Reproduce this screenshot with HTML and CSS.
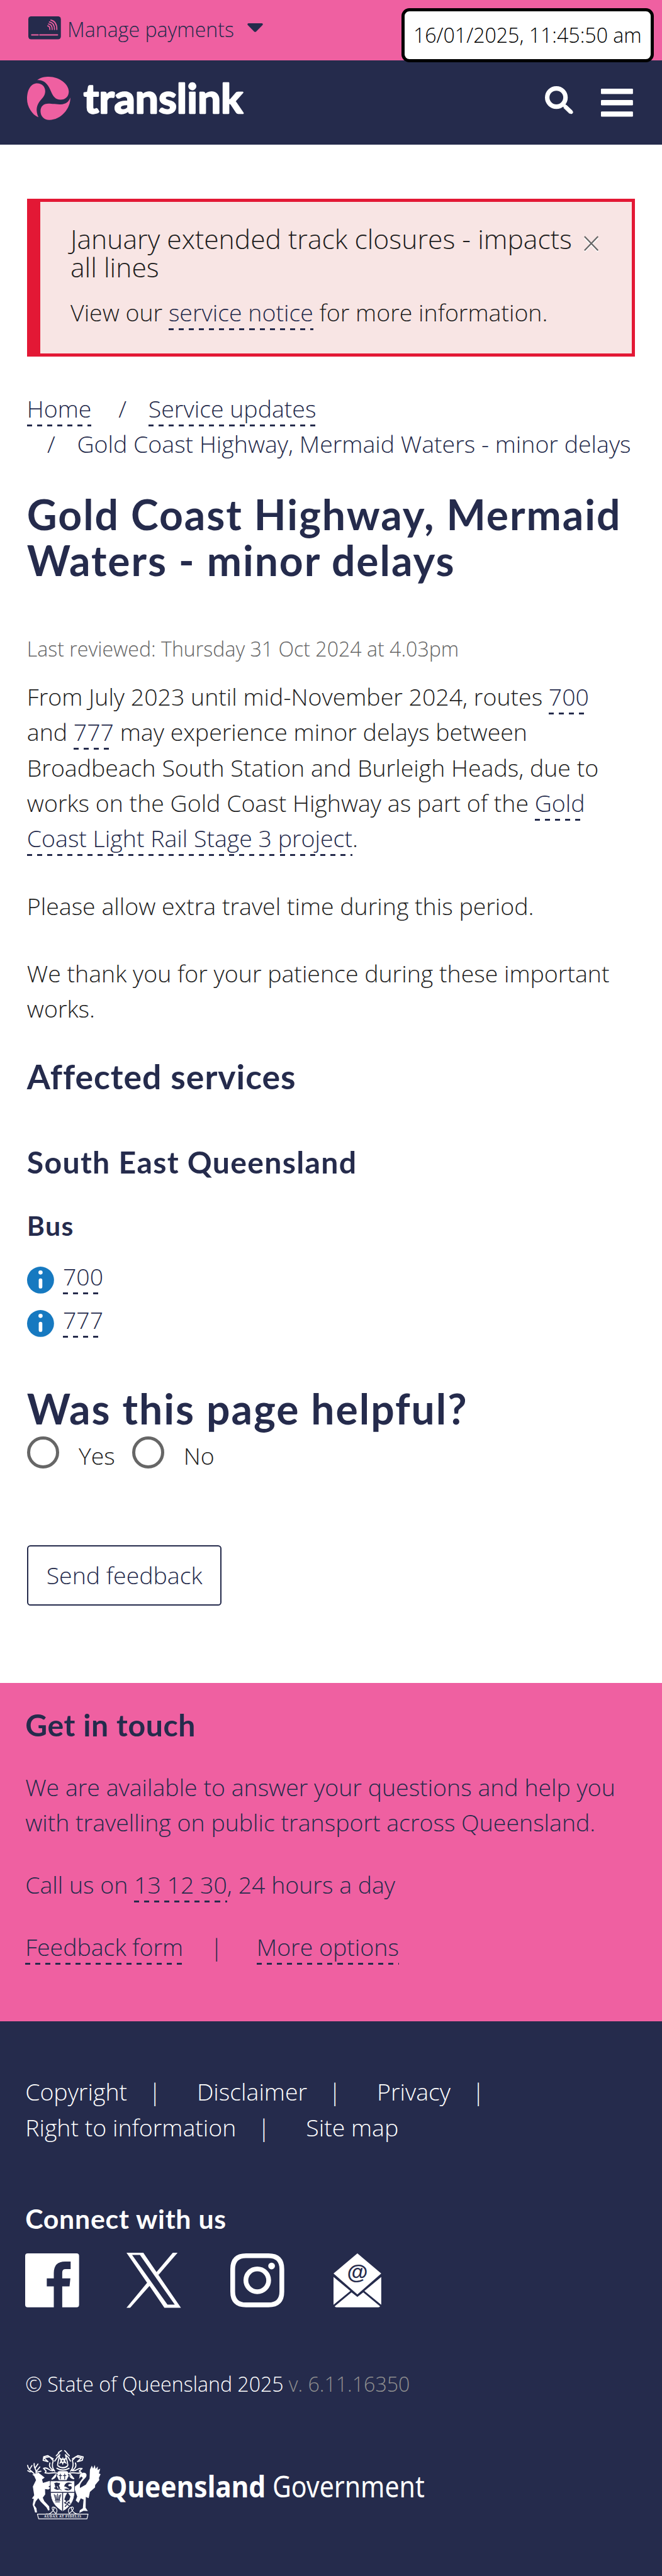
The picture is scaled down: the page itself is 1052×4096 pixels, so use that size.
FILE: index.html
```html
<!DOCTYPE html>
<html lang="en">
<head>
<meta charset="utf-8">
<title>Gold Coast Highway, Mermaid Waters - minor delays | Translink</title>
<link rel="stylesheet" href="styles.css">
</head>
<body>
<div class="payments-bar">
  <svg class="card-icon" viewBox="0 0 58 41"><rect width="58" height="41" rx="5" fill="#252b4c"/><g fill="none" stroke="#ef60a1" stroke-width="1.9" stroke-linecap="round"><path d="M6 33H17.500M20.500 33H52" stroke-width="2.300"/><path d="M40 6.500C47 8 51 14 50.800 23.500M37.500 10C43.500 11 46.800 16 46.600 23.500M36 13.500C40.500 14 42.600 18 42.500 23.500M34.500 17C37.500 17.500 38.500 20 38.400 23.500"/></g></svg>
  <span class="payments-label">Manage payments</span>
  <svg class="caret" viewBox="0 0 28 16"><path d="M2 0H26Q29 1 27 3.500L16 14.500Q14 16.500 12 14.500L1 3.500Q-1 1 2 0Z" fill="#252b4c"/></svg>
  <div class="timestamp">16/01/2025, 11:45:50 am</div>
</div>
<header class="site-header">
  <div class="logo">
    <svg class="logo-mark" viewBox="24 36 231 231" fill="#ef60a1">
      <path d="M78 54C95 40 120 36 140 36C195 36 247 75 247 115C247 142 228 159 203 159C175 159 163 140 152 115C140 85 120 50 78 54Z"/>
      <path d="M85 253C50 238 24 195 24 155C24 105 45 71 78 71C103 71 121 88 121 113C121 135 108 148 95 163C75 188 68 215 85 253Z"/>
      <path d="M255 147C258 205 205 267 143 267C115 267 96 248 96 220C96 195 112 180 138 180C155 180 185 184 205 184C230 183 248 170 255 147Z"/>
    </svg>
    <svg class="logo-word" viewBox="0 0 288 77"><text class="logo-text" x="2" y="65" textLength="284" lengthAdjust="spacingAndGlyphs">translink</text></svg>
  </div>
  <div class="header-tools">
    <svg class="search-icon" viewBox="0 0 50 50"><circle cx="20.300" cy="20.300" r="16.300" fill="none" stroke="#fff" stroke-width="8"/><path d="M35.500 36L46.500 46.500" stroke="#fff" stroke-width="7.500" stroke-linejoin="round"/><path d="M34 34L47 46.500" stroke="#fff" stroke-width="6" stroke-linecap="round"/></svg>
    <svg class="menu-icon" viewBox="0 0 57 50"><g fill="#fff"><rect width="57" height="9.500" rx="1.500"/><rect y="20.300" width="57" height="9.500" rx="1.500"/><rect y="40.500" width="57" height="9.500" rx="1.500"/></g></svg>
  </div>
</header>
<main class="content">
  <section class="alert">
    <div class="alert-body">
      <h2 class="alert-title">January extended track closures - impacts<br>all lines</h2>
      <p class="text">View our <a class="link">service notice</a> for more information.</p>
    </div>
    <svg class="close-icon" viewBox="0 0 26 29"><path d="M1 4L25 28M25 4L1 28" stroke="#fff" stroke-width="2.500"/><path d="M1 1L25 26M25 1L1 26" stroke="#666" stroke-width="2.500"/></svg>
  </section>
  <nav class="breadcrumb">
    <div class="crumb-row"><a class="link">Home</a><span class="slash">/</span><a class="link">Service updates</a></div>
    <div class="crumb-row crumb-current"><span>/</span><span>Gold Coast Highway, Mermaid Waters - minor delays</span></div>
  </nav>
  <h1 class="title">Gold Coast Highway, Mermaid<br>Waters - minor delays</h1>
  <p class="reviewed">Last reviewed: Thursday 31 Oct 2024 at 4.03pm</p>
  <p class="text">From July 2023 until mid-November 2024, routes <a class="link">700</a><br>and <a class="link">777</a> may experience minor delays between<br>Broadbeach South Station and Burleigh Heads, due to<br>works on the Gold Coast Highway as part of the <a class="link">Gold<br>Coast Light Rail Stage 3 project</a>.</p>
  <p class="text spaced">Please allow extra travel time during this period.</p>
  <p class="text spaced">We thank you for your patience during these important<br>works.</p>
  <h2 class="affected">Affected services</h2>
  <h3 class="region">South East Queensland</h3>
  <h4 class="mode">Bus</h4>
  <ul class="routes">
    <li class="route"><svg class="info-icon" viewBox="0 0 48 48"><circle cx="24" cy="24" r="24" fill="#1679c0"/><circle cx="24" cy="10.500" r="3.700" fill="#fff"/><rect x="20.800" y="21" width="6.400" height="18" rx="3.200" fill="#fff"/></svg><a class="link">700</a></li>
    <li class="route"><svg class="info-icon" viewBox="0 0 48 48"><circle cx="24" cy="24" r="24" fill="#1679c0"/><circle cx="24" cy="10.500" r="3.700" fill="#fff"/><rect x="20.800" y="21" width="6.400" height="18" rx="3.200" fill="#fff"/></svg><a class="link">777</a></li>
  </ul>
  <h2 class="title helpful">Was this page helpful?</h2>
  <div class="choices">
    <label class="choice"><span class="radio"></span><span class="choice-text">Yes</span></label>
    <label class="choice"><span class="radio"></span><span class="choice-text">No</span></label>
  </div>
  <button class="feedback-button">Send feedback</button>
</main>
<section class="touch">
  <h2 class="touch-title">Get in touch</h2>
  <p class="text touch-text">We are available to answer your questions and help you<br>with travelling on public transport across Queensland.</p>
  <p class="text touch-text">Call us on <a class="link">13 12 30</a>, 24 hours a day</p>
  <div class="touch-links"><a class="link">Feedback form</a><span class="touch-bar">|</span><a class="link">More options</a></div>
</section>
<footer class="footer">
  <div class="footer-links">
    <div class="footer-row"><a>Copyright</a><span class="bar">|</span><a>Disclaimer</a><span class="bar">|</span><a>Privacy</a><span class="bar">|</span></div>
    <div class="footer-row"><a>Right to information</a><span class="bar">|</span><a>Site map</a></div>
  </div>
  <h3 class="connect">Connect with us</h3>
  <div class="social">
    <svg class="facebook" viewBox="0 0 96 96"><path fill="#fff" d="M4.500 0H91.500Q96 0 96 4.500V91.500Q96 96 91.500 96H66V58.700H79L80.500 44.500H66V34Q66 28 72 28H81V14.500H71Q51 14.500 51 35V44.500H38.500V58.700H51V96H4.500Q0 96 0 91.500V4.500Q0 0 4.500 0Z"/></svg>
    <svg class="x-icon" viewBox="0 0 97 98"><path fill="#fff" fill-rule="evenodd" d="M0 0H30L57 39.500L97 98H67.500L41 59L6.500 98H0L36.700 53.500ZM10 4L73 92.500H86L24 4Z"/><path fill="#fff" d="M82.500 0H91L57 39.500L53 35Z"/></svg>
    <svg class="instagram" viewBox="0 0 96 96"><g fill="none" stroke="#fff" stroke-width="8.500"><path d="M28 4.250H68Q91.750 4.250 91.750 28V68Q91.750 91.750 68 91.750H28Q4.250 91.750 4.250 68V28Q4.250 4.250 28 4.250Z"/><circle cx="48" cy="48" r="20.300"/></g><circle cx="73.500" cy="22.500" r="6" fill="#fff"/></svg>
    <svg class="mail" viewBox="0 0 85 96"><g fill="#fff"><path d="M42.500 0L85 36L42.500 73L0 36Z"/><path d="M0 42L30 67L0 91.500ZM85 42L55 67L85 91.500Z"/><path d="M2 94.500L32 69.500L42.500 77.500L53 69.500L83 94.500Q82 96 80 96H5Q3 96 2 94.500Z"/></g><text class="mail-at" x="42.500" y="46" text-anchor="middle">@</text></svg>
  </div>
  <p class="copyright">© State of Queensland 2025<span class="version">v. 6.11.16350</span></p>
  <svg class="government" viewBox="0 0 708 123">
    <g transform="scale(.3333) translate(-24 -30)" fill="#fff" stroke-linejoin="round" stroke-linecap="round">
      <!-- antlers and deer -->
      <path d="M62 156C50 140 32 140 27 111M38 132L50 112M50 143L40 146L28 139M72 152C78 135 58 125 62 101M68 124L82 104M76 140L92 120M72 148L98 142" fill="none" stroke="#fff" stroke-width="6"/>
      <path d="M52 160L85 150L98 160L118 176L104 186L109 205L145 194L156 212L138 225L149 232L138 240L120 238L121 266L108 284L116 302L142 330L144 350L137 353L128 336L96 304L84 286L70 304L63 325L74 340L77 363L67 363L60 338L54 322L60 291L50 288L62 271L55 224L72 190L62 168Z"/>
      <!-- crane -->
      <path d="M297 187C314 172 292 160 322 151C340 146 350 164 334 180C318 197 303 212 307 232L338 214L358 182L360 134L370 112L377 128L386 109L390 130L402 117L401 136L415 128L408 154L417 158L408 178L410 190L388 216L387 229L360 253L353 286L338 280L337 338L349 355L326 354L303 365L306 351L322 340L326 294L311 287L299 312L284 298L292 278L281 246L274 228L300 208L322 178L314 170Z"/>
      <!-- helm, mantling and crest -->
      <path d="M110 84L136 91L114 71L145 65L164 86C157 105 158 127 172 142M110 84L113 65L134 59L164 76M146 98C138 119 151 127 164 139C140 145 138 116 112 127L126 142L120 151C155 160 169 142 190 156M319 84L293 91L315 71L284 65L266 84C273 105 270 126 257 142M319 84L324 66L296 59L266 76M282 98C291 119 278 128 265 139C292 146 291 120 318 128L303 141L315 151C285 158 260 142 239 158M172 88L185 69L199 54L190 91L187 110M256 88L244 68L229 54L239 91L242 110M192 42L208 32M235 42L225 32M180 60L195 44M250 60L235 44" fill="none" stroke="#fff" stroke-width="6"/>
      <path d="M195 67L211 76L215 66L220 76L236 68L227 86L237 103L220 96L215 110L209 96L195 104L203 86Z"/>
      <circle cx="215" cy="87" r="5" fill="#252b4c"/>
      <path d="M190 114C205 127 226 127 240 114M184 127C204 139 226 139 248 127M195 145H235M191 151C186 165 171 178 158 184L178 161M238 151C246 168 260 178 273 182L253 157" fill="none" stroke="#fff" stroke-width="7"/>
      <path d="M188 144L242 144L246 168L235 190H194L184 169Z"/>
      <path d="M202 157V184M195 166H209M225 157V184M218 166H232M186 158L174 187M244 158L257 187" stroke="#252b4c" stroke-width="4"/>
      <!-- shield -->
      <path d="M149 194H278V253C278 303 254 334 214 358C174 334 149 303 149 253Z" stroke="#252b4c" stroke-width="3"/>
      <path d="M151 255H277M214 257V354" stroke="#252b4c" stroke-width="5"/>
      <path d="M172 207C184 200 191 209 199 207L193 221C210 240 183 247 169 232C182 231 173 219 172 207ZM225 222C225 207 243 199 262 208C246 207 237 217 247 223C253 227 261 217 261 231C261 243 239 248 225 238C250 237 242 228 225 222ZM196 238L207 243" fill="#252b4c" stroke="#252b4c" stroke-width="3"/>
      <path d="M185 224L190 234M231 229L246 238" stroke="#fff" stroke-width="4"/>
      <path d="M174 298H200M176 306H198M178 295L169 267M187 295V264M196 295L204 267M182 294L178 271M192 294L196 271" fill="none" stroke="#252b4c" stroke-width="4"/>
      <path d="M241 259L253 278L247 296L235 300L226 293L232 275ZM224 310L249 326M249 306L228 331M229 309L236 304M243 308L253 314" fill="#252b4c" stroke="#252b4c" stroke-width="5"/>
      <!-- scroll -->
      <path d="M79 372H350L344 397H86ZM127 370C150 377 180 339 164 333C150 334 163 356 176 366M164 333C190 340 186 360 178 369M301 370C278 376 249 340 265 333C280 336 267 356 251 366M265 333C239 340 243 359 250 369" fill="none" stroke="#fff" stroke-width="4"/>
      <text class="motto" x="115" y="391" textLength="198">AUDAX AT FIDELIS</text>
    </g>
    <text class="gov-bold" x="141" y="84" textLength="284" lengthAdjust="spacingAndGlyphs">Queensland</text>
    <text class="gov-light" x="437" y="84" textLength="271" lengthAdjust="spacingAndGlyphs">Government</text>
  </svg>
</footer>
</body>
</html>
```
FILE: styles.css
```css
html { font-size: calc(100vw / 11.79); }
* { box-sizing: border-box; }
body {
  margin: 0;
  background: #fff;
  color: #1e1e1e;
  font-family: "Open Sans", "Noto Sans", sans-serif;
  font-weight: 300;
  font-size: .42rem;
  line-height: .63rem;
  overflow-x: hidden;
}
h1, h2, h3, h4, p, ul { margin: 0; padding: 0; }
svg { display: block; overflow: visible; flex: none; }
h1, h2, h3, h4 { font-family: Lato, "Open Sans", sans-serif; font-weight: 700; color: #252b4c; white-space: nowrap; }
p { white-space: nowrap; }

.link {
  color: #252b4c;
  padding-bottom: .032rem;
  background-image: repeating-linear-gradient(90deg, #252b4c 0 .09rem, transparent .09rem .18rem);
  background-size: 100% .034rem;
  background-position: 0 100%;
  background-repeat: no-repeat;
  -webkit-box-decoration-break: clone;
  box-decoration-break: clone;
}

.payments-bar { position: relative; display: flex; height: 1.08rem; padding-left: .5rem; background: #ef60a1; color: #252b4c; }
.card-icon { width: .58rem; height: .41rem; margin-top: .29rem; }
.payments-label { margin: .26rem 0 0 .12rem; width: 3rem; font-size: .36rem; line-height: .54rem; white-space: nowrap; }
.caret { width: .28rem; height: .16rem; margin: .42rem 0 0 .21rem; }
.timestamp {
  position: absolute; top: .15rem; right: .15rem; width: 4.49rem; height: .96rem;
  border: .06rem solid #000; border-radius: .14rem; background: #fff; color: #000;
  font-size: .36rem; line-height: .85rem; text-align: center; white-space: nowrap;
}

.site-header { display: flex; justify-content: space-between; height: 1.5rem; padding: .29rem .52rem 0 .48rem; background: #252b4c; }
.logo { display: flex; gap: .22rem; }
.logo-mark { width: .77rem; height: .77rem; }
.logo-word { width: 2.88rem; height: .77rem; }
.logo-text { font: 700 72px Lato, sans-serif; fill: #fff; stroke: #fff; stroke-width: 2.6px; stroke-linejoin: round; }
.header-tools { display: flex; gap: .5rem; padding-top: .17rem; }
.search-icon { width: .5rem; height: .5rem; }
.menu-icon { width: .57rem; height: .5rem; margin-top: .04rem; }

.content { padding: .96rem .48rem 1.38rem; }
.alert {
  display: flex; justify-content: space-between; height: 2.82rem; padding: .41rem .59rem 0 .54rem;
  border: .06rem solid #e31835; border-left-width: .24rem; background: #f8e5e4;
}
.alert-title { margin-bottom: .24rem; font-family: "Open Sans", sans-serif; font-weight: 300; font-size: .478rem; line-height: .504rem; color: #1e1e1e; }
.close-icon { width: .26rem; height: .29rem; margin-top: .2rem; }

.breadcrumb { margin-top: .61rem; color: #252b4c; white-space: nowrap; }
.crumb-row { display: flex; }
.crumb-row .link { height: .63rem; }
.slash { margin: 0 .39rem 0 .48rem; }
.crumb-current { gap: .39rem; padding-left: .36rem; }

.title { margin-top: .54rem; font-size: .74rem; line-height: .815rem; letter-spacing: .022rem; }
.reviewed { margin: .9rem 0 .266rem; font-size: .36rem; line-height: .54rem; color: #666; }
.spaced { margin-top: .575rem; }
.affected { margin-top: .56rem; font-size: .6rem; line-height: .66rem; letter-spacing: .011rem; }
.region { margin-top: .89rem; font-size: .54rem; line-height: .6rem; letter-spacing: .0145rem; }
.mode { margin-top: .57rem; font-size: .48rem; line-height: .54rem; letter-spacing: .015rem; }
.routes { display: flex; flex-direction: column; gap: .15rem; margin-top: .316rem; list-style: none; }
.route { display: flex; align-items: flex-start; gap: .16rem; height: .63rem; }
.route .link { height: .63rem; }
.info-icon { width: .48rem; height: .48rem; margin-top: .135rem; }
.helpful { margin-top: .86rem; }
.choices { display: flex; height: .66rem; margin-top: .08rem; }
.choice { display: flex; width: 1.87rem; gap: .35rem; }
.radio { width: .57rem; height: .57rem; border: .06rem solid #666; border-radius: 50%; }
.choice-text { margin-top: .03rem; }
.feedback-button {
  display: block; width: 3.47rem; height: 1.08rem; margin-top: 1.28rem; padding: 0;
  border: .03rem solid #252b4c; border-radius: .06rem; background: #fff; color: #252b4c;
  font: 300 .42rem/.63rem "Open Sans", sans-serif;
}

.touch { height: 6.03rem; padding: .44rem .45rem 0; background: #ef60a1; color: #252b4c; }
.touch-title { font-size: .54rem; line-height: .6rem; margin-bottom: .5rem; letter-spacing: .0065rem; }
.touch-text { margin-bottom: .48rem; }
.touch-links { display: flex; white-space: nowrap; }
.touch-links .link { height: .63rem; }
.touch-bar { margin: 0 .6rem 0 .48rem; }

.footer { height: 9.88rem; padding: .94rem .45rem 0; background: #252b4c; color: #fff; }
.footer-row { display: flex; white-space: nowrap; }
.bar { margin: 0 .635rem 0 .38rem; }
.connect { margin: 1.05rem 0 .33rem; font-size: .48rem; line-height: .54rem; letter-spacing: .0085rem; color: #fff; }
.social { display: flex; align-items: center; height: .98rem; }
.facebook { width: .96rem; height: .96rem; }
.x-icon { width: .97rem; height: .98rem; margin-left: .84rem; }
.instagram { width: .96rem; height: .96rem; margin-left: .88rem; }
.mail { width: .85rem; height: .96rem; margin-left: .88rem; }
.mail-at { font: 700 38px "Liberation Sans", sans-serif; fill: #252b4c; }
.copyright { margin-top: 1.09rem; font-size: .36rem; line-height: .54rem; }
.version { margin-left: .09rem; color: #8f8f8f; }
.government { width: 7.08rem; height: 1.23rem; margin: .91rem 0 0 .03rem; }
.motto { font: 700 18px "Liberation Serif", serif; fill: #fff; }
.gov-bold { font: 700 53px "Noto Sans", sans-serif; fill: #fff; }
.gov-light { font: 400 53px "Noto Sans", sans-serif; fill: #fff; }
```
